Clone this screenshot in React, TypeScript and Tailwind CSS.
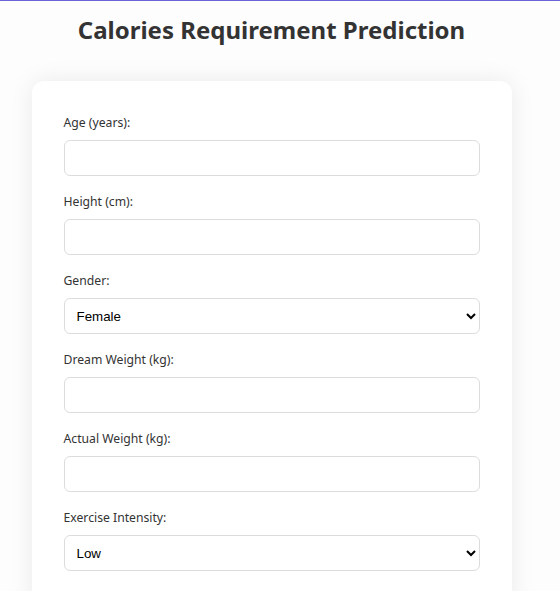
export default function App() {
  const fields = [
    { label: 'Age (years):', type: 'input' },
    { label: 'Height (cm):', type: 'input' },
    { label: 'Gender:', type: 'select', value: 'Female', options: ['Female', 'Male'] },
    { label: 'Dream Weight (kg):', type: 'input' },
    { label: 'Actual Weight (kg):', type: 'input' },
    { label: 'Exercise Intensity:', type: 'select', value: 'Low', options: ['Low', 'Medium', 'High'] },
  ];

  return (
    <div className="min-h-[591px] border-t border-[#6c63d6] bg-[#fdfdfd] font-['Noto_Sans',sans-serif]">
      <div className="w-[543px]">
        <h1 className="pt-[12px] text-center text-[24px] leading-[33px] font-bold text-[#333]">
          Calories Requirement Prediction
        </h1>

        <div className="mx-auto mt-[35px] w-[480px] rounded-xl bg-white px-8 pt-8 pb-6 shadow-[0_0_24px_rgba(0,0,0,0.08)]">
          {fields.map((field) => (
            <div key={field.label} className="mb-4">
              <label className="mb-2 block text-[12.2px] leading-[19px] text-[#333]">{field.label}</label>
              {field.type === 'input' ? (
                <input
                  type="number"
                  className="block h-9 w-full rounded-md border border-[#dcdcdc] bg-white px-3 outline-none"
                />
              ) : (
                <select
                  defaultValue={field.value}
                  className="block h-9 w-full rounded-md border border-[#dcdcdc] bg-white pr-1 pl-2 font-['Liberation_Sans',Arial,sans-serif] text-[13.33px] text-black outline-none"
                >
                  {field.options?.map((o) => (
                    <option key={o}>{o}</option>
                  ))}
                </select>
              )}
            </div>
          ))}
        </div>
      </div>
    </div>
  );
}
